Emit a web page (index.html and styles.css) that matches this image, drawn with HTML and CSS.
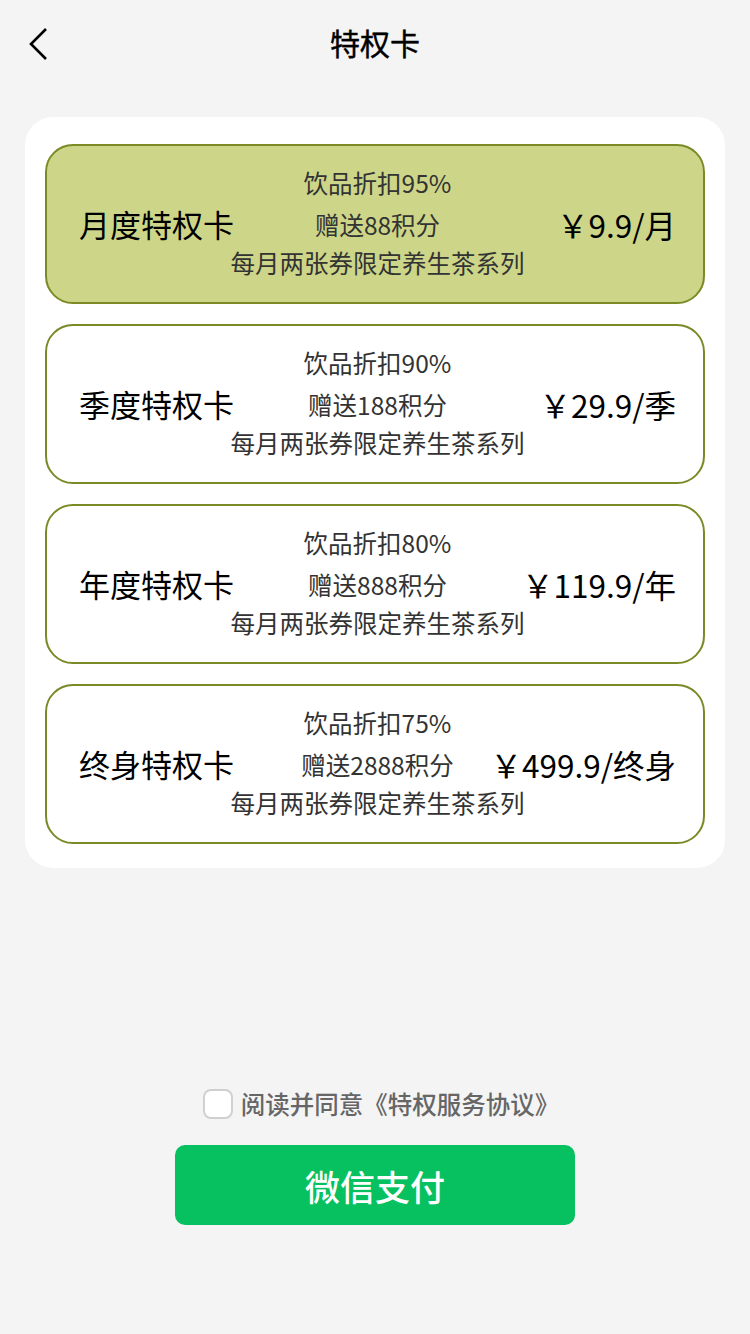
FILE: index.html
```html
<!DOCTYPE html>
<html lang="zh">
<head>
<meta charset="utf-8">
<link rel="stylesheet" href="styles.css">
</head>
<body>
<div class="page">
  <header class="nav">
    <svg class="back" width="20" height="34" viewBox="0 0 20 34"><path d="M17 2 L2 17 L17 32" fill="none" stroke="#000" stroke-width="2.6"/></svg>
    <h1 class="nav-title">特权卡</h1>
  </header>

  <section class="panel">
    <div class="card active">
      <div class="line">饮品折扣95%</div>
      <div class="row">
        <span class="name">月度特权卡</span>
        <span class="gift">赠送88积分</span>
        <span class="price">￥9.9/月</span>
      </div>
      <div class="line last">每月两张券限定养生茶系列</div>
    </div>
    <div class="card">
      <div class="line">饮品折扣90%</div>
      <div class="row">
        <span class="name">季度特权卡</span>
        <span class="gift">赠送188积分</span>
        <span class="price">￥29.9/季</span>
      </div>
      <div class="line last">每月两张券限定养生茶系列</div>
    </div>
    <div class="card">
      <div class="line">饮品折扣80%</div>
      <div class="row">
        <span class="name">年度特权卡</span>
        <span class="gift">赠送888积分</span>
        <span class="price">￥119.9/年</span>
      </div>
      <div class="line last">每月两张券限定养生茶系列</div>
    </div>
    <div class="card">
      <div class="line">饮品折扣75%</div>
      <div class="row">
        <span class="name">终身特权卡</span>
        <span class="gift">赠送2888积分</span>
        <span class="price">￥499.9/终身</span>
      </div>
      <div class="line last">每月两张券限定养生茶系列</div>
    </div>
  </section>

  <div class="agree">
    <span class="checkbox"></span>
    <span class="agree-text">阅读并同意《特权服务协议》</span>
  </div>
  <div class="pay-wrap">
    <button class="pay">微信支付</button>
  </div>
</div>
</body>
</html>
```
FILE: styles.css
```css
* { box-sizing: border-box; margin: 0; padding: 0; }
html, body {
  width: 750px;
  height: 1334px;
  background: #f4f4f4;
  font-family: "Noto Sans CJK SC", "Noto Sans", sans-serif;
  overflow: hidden;
}
.page {
  width: 750px;
  display: flex;
  flex-direction: column;
}
.nav {
  position: relative;
  height: 88px;
  display: flex;
  align-items: center;
  justify-content: center;
}
.back {
  position: absolute;
  left: 29px;
  top: 27px;
}
.nav-title {
  font-size: 30px;
  font-weight: 400;
  color: #000;
  line-height: 1;
  margin-top: -4px;
  -webkit-text-stroke: 0.4px #000;
}
.panel {
  margin: 29px 25px 0;
  background: #fff;
  border-radius: 28px;
  padding: 27px 20px 24px;
  display: flex;
  flex-direction: column;
  gap: 20px;
}
.card {
  height: 160px;
  border: 2px solid #7b8a26;
  border-radius: 28px;
  background: #fff;
  padding: 17px 27px 0 32px;
  display: flex;
  flex-direction: column;
}
.card.active { background: #cdd688; }
.line {
  text-align: center;
  font-size: 24.5px;
  line-height: 40px;
  color: #333;
}
.line.last { line-height: 44px; }
.row {
  display: grid;
  grid-template-columns: 1fr auto 1fr;
  align-items: center;
  height: 38px;
  line-height: 38px;
}
.name {
  justify-self: start;
  font-size: 31px;
  color: #000;
}
.gift {
  font-size: 24.5px;
  color: #333;
  padding-top: 3px;
}
.price {
  justify-self: end;
  font-size: 31.5px;
  color: #000;
}
.agree {
  margin-top: 221px;
  padding-left: 12px;
  display: flex;
  align-items: center;
  justify-content: center;
  gap: 8px;
}
.checkbox {
  width: 30px;
  height: 30px;
  border: 2px solid #d0d0d0;
  border-radius: 8px;
  background: #fff;
}
.agree-text {
  font-size: 24.5px;
  font-weight: 500;
  color: #666;
  line-height: 30px;
}
.pay-wrap {
  margin-top: 26px;
  display: flex;
  justify-content: center;
}
.pay {
  width: 400px;
  height: 80px;
  border: none;
  border-radius: 10px;
  background: #07c160;
  color: #fff;
  font-family: "Noto Sans CJK SC", "Noto Sans", sans-serif;
  font-size: 35px;
  font-weight: 500;
}
```
